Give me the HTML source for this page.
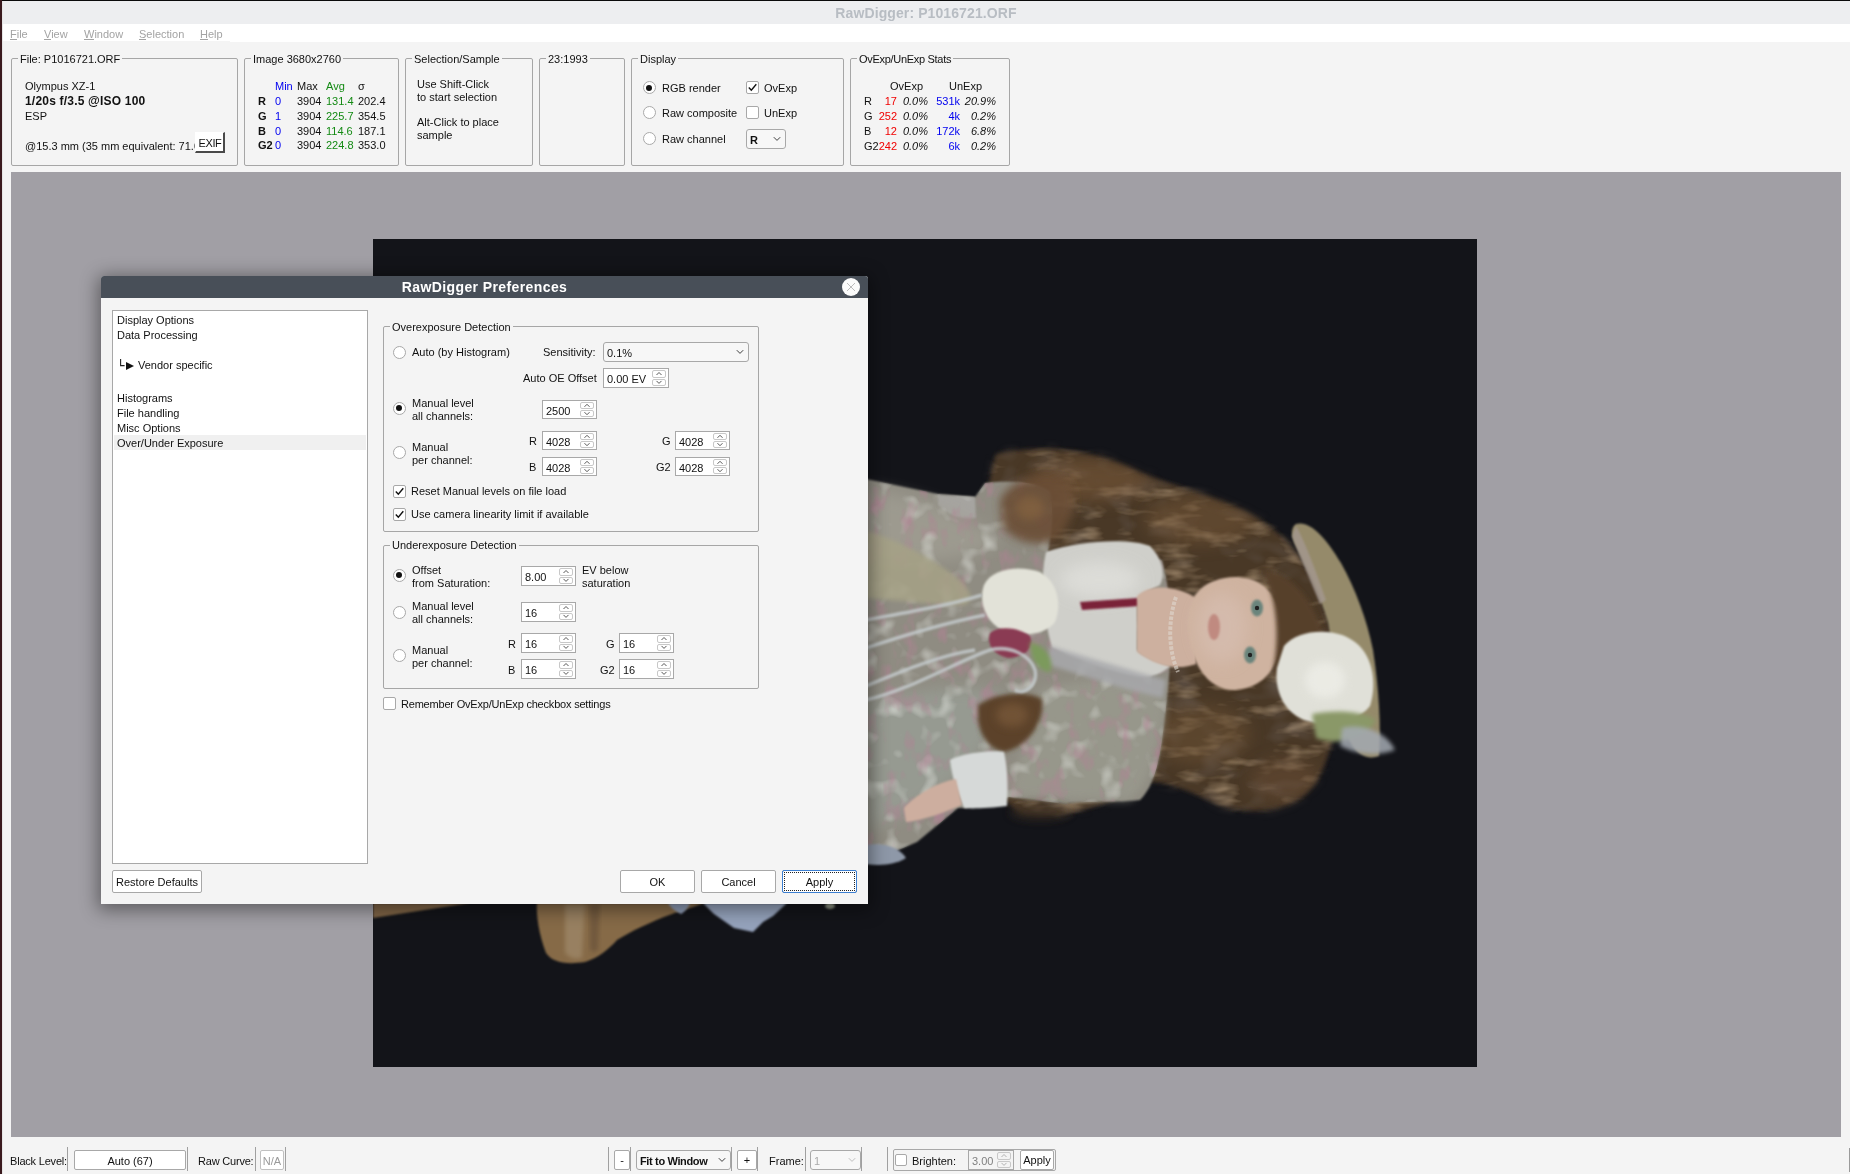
<!DOCTYPE html>
<html><head><meta charset="utf-8">
<style>
*{box-sizing:border-box}
html,body{margin:0;padding:0}
body{width:1850px;height:1174px;overflow:hidden;position:relative;will-change:transform;background:#f4f4f4;font-family:"Liberation Sans",sans-serif;font-size:11px;color:#111}
.a{position:absolute}
.t{position:absolute;white-space:pre}
</style></head><body>
<div class="a" style="left:0px;top:0px;width:1850px;height:1px;background:#0a0a0a"></div>
<div class="a" style="left:0px;top:0px;width:2px;height:1174px;background:#3a1a1e"></div>
<div class="a" style="left:2px;top:1px;width:1px;height:1173px;background:#e6e6e6"></div>
<div class="a" style="left:3px;top:1px;width:1847px;height:23px;background:#edeef0"></div>
<div class="t" style="left:626px;width:600px;text-align:center;top:4.75px;font-size:14px;line-height:17px;font-weight:700;color:#b8bdc3;letter-spacing:0.1px;">RawDigger: P1016721.ORF</div>
<div class="a" style="left:3px;top:24px;width:1847px;height:18px;background:#fff"></div>
<div class="a" style="left:3px;top:41px;width:227px;height:1px;background:#f4f4f4"></div>
<div class="t" style="left:10px;top:27.19px;font-size:11px;line-height:14px;color:#a3a3a3;">File</div>
<div class="t" style="left:44px;top:27.19px;font-size:11px;line-height:14px;color:#a3a3a3;">View</div>
<div class="t" style="left:84px;top:27.19px;font-size:11px;line-height:14px;color:#a3a3a3;">Window</div>
<div class="t" style="left:139px;top:27.19px;font-size:11px;line-height:14px;color:#a3a3a3;">Selection</div>
<div class="t" style="left:200px;top:27.19px;font-size:11px;line-height:14px;color:#a3a3a3;">Help</div>
<div class="a" style="left:10px;top:39px;width:7px;height:1px;background:#a3a3a3"></div>
<div class="a" style="left:44px;top:39px;width:7px;height:1px;background:#a3a3a3"></div>
<div class="a" style="left:84px;top:39px;width:10px;height:1px;background:#a3a3a3"></div>
<div class="a" style="left:139px;top:39px;width:7px;height:1px;background:#a3a3a3"></div>
<div class="a" style="left:200px;top:39px;width:8px;height:1px;background:#a3a3a3"></div>
<div class="a" style="left:11px;top:58px;width:227px;height:108px;border:1px solid #a6a6a6;border-radius:2px;"></div>
<div class="t" style="left:18px;top:53.09px;font-size:11px;line-height:13px;background:#f4f4f4;padding:0 2px;">File: P1016721.ORF</div>
<div class="t" style="left:25px;top:78.99px;font-size:11px;line-height:14px;">Olympus XZ-1</div>
<div class="t" style="left:25px;top:93.94px;font-size:12px;line-height:15px;font-weight:700;letter-spacing:0.2px;">1/20s f/3.5 @ISO 100</div>
<div class="t" style="left:25px;top:108.89px;font-size:11px;line-height:14px;">ESP</div>
<div class="a" style="left:25px;top:138px;width:170px;height:16px;overflow:hidden">
<div class="t" style="left:0px;top:0.79px;font-size:11px;line-height:14px;">@15.3 mm (35 mm equivalent: 71.0 mm)</div>
</div>
<div class="a" style="left:195px;top:132px;width:30px;height:21px;background:#fff;border-right:2px solid #4a4a4a;border-bottom:2px solid #4a4a4a;border-top:1px solid #fff;border-left:1px solid #fff"></div>
<div class="t" style="left:-90px;width:600px;text-align:center;top:135.69px;font-size:11px;line-height:14px;letter-spacing:-0.4px;">EXIF</div>
<div class="a" style="left:244px;top:58px;width:155px;height:108px;border:1px solid #a6a6a6;border-radius:2px;"></div>
<div class="t" style="left:251px;top:53.09px;font-size:11px;line-height:13px;background:#f4f4f4;padding:0 2px;">Image 3680x2760</div>
<div class="t" style="left:275px;top:78.99px;font-size:11px;line-height:14px;color:#0000f0;">Min</div>
<div class="t" style="left:297px;top:78.99px;font-size:11px;line-height:14px;">Max</div>
<div class="t" style="left:326px;top:78.99px;font-size:11px;line-height:14px;color:#138a13;">Avg</div>
<div class="t" style="left:358px;top:78.99px;font-size:11px;line-height:14px;">σ</div>
<div class="t" style="left:258px;top:93.79px;font-size:11px;line-height:14px;font-weight:700;">R</div>
<div class="t" style="left:275px;top:93.79px;font-size:11px;line-height:14px;color:#0000f0;">0</div>
<div class="t" style="left:297px;top:93.79px;font-size:11px;line-height:14px;">3904</div>
<div class="t" style="left:326px;top:93.79px;font-size:11px;line-height:14px;color:#138a13;">131.4</div>
<div class="t" style="left:358px;top:93.79px;font-size:11px;line-height:14px;">202.4</div>
<div class="t" style="left:258px;top:108.89px;font-size:11px;line-height:14px;font-weight:700;">G</div>
<div class="t" style="left:275px;top:108.89px;font-size:11px;line-height:14px;color:#0000f0;">1</div>
<div class="t" style="left:297px;top:108.89px;font-size:11px;line-height:14px;">3904</div>
<div class="t" style="left:326px;top:108.89px;font-size:11px;line-height:14px;color:#138a13;">225.7</div>
<div class="t" style="left:358px;top:108.89px;font-size:11px;line-height:14px;">354.5</div>
<div class="t" style="left:258px;top:123.69px;font-size:11px;line-height:14px;font-weight:700;">B</div>
<div class="t" style="left:275px;top:123.69px;font-size:11px;line-height:14px;color:#0000f0;">0</div>
<div class="t" style="left:297px;top:123.69px;font-size:11px;line-height:14px;">3904</div>
<div class="t" style="left:326px;top:123.69px;font-size:11px;line-height:14px;color:#138a13;">114.6</div>
<div class="t" style="left:358px;top:123.69px;font-size:11px;line-height:14px;">187.1</div>
<div class="t" style="left:258px;top:138.49px;font-size:11px;line-height:14px;font-weight:700;">G2</div>
<div class="t" style="left:275px;top:138.49px;font-size:11px;line-height:14px;color:#0000f0;">0</div>
<div class="t" style="left:297px;top:138.49px;font-size:11px;line-height:14px;">3904</div>
<div class="t" style="left:326px;top:138.49px;font-size:11px;line-height:14px;color:#138a13;">224.8</div>
<div class="t" style="left:358px;top:138.49px;font-size:11px;line-height:14px;">353.0</div>
<div class="a" style="left:405px;top:58px;width:128px;height:108px;border:1px solid #a6a6a6;border-radius:2px;"></div>
<div class="t" style="left:412px;top:53.09px;font-size:11px;line-height:13px;background:#f4f4f4;padding:0 2px;">Selection/Sample</div>
<div class="t" style="left:417px;top:77.49px;font-size:11px;line-height:14px;">Use Shift-Click</div>
<div class="t" style="left:417px;top:90.19px;font-size:11px;line-height:14px;">to start selection</div>
<div class="t" style="left:417px;top:114.79px;font-size:11px;line-height:14px;">Alt-Click to place</div>
<div class="t" style="left:417px;top:127.59px;font-size:11px;line-height:14px;">sample</div>
<div class="a" style="left:539px;top:58px;width:86px;height:108px;border:1px solid #a6a6a6;border-radius:2px;"></div>
<div class="t" style="left:546px;top:53.09px;font-size:11px;line-height:13px;background:#f4f4f4;padding:0 2px;">23:1993</div>
<div class="a" style="left:631px;top:58px;width:213px;height:108px;border:1px solid #a6a6a6;border-radius:2px;"></div>
<div class="t" style="left:638px;top:53.09px;font-size:11px;line-height:13px;background:#f4f4f4;padding:0 2px;">Display</div>
<div class="a" style="left:642.5px;top:81.0px;width:13px;height:13px;border-radius:50%;border:1px solid #a8a8a8;background:#fff"></div>
<div class="a" style="left:646px;top:84.5px;width:6px;height:6px;border-radius:50%;background:#111"></div>
<div class="a" style="left:642.5px;top:106.0px;width:13px;height:13px;border-radius:50%;border:1px solid #a8a8a8;background:#fff"></div>
<div class="a" style="left:642.5px;top:131.8px;width:13px;height:13px;border-radius:50%;border:1px solid #a8a8a8;background:#fff"></div>
<div class="t" style="left:662px;top:81.19px;font-size:11px;line-height:14px;">RGB render</div>
<div class="t" style="left:662px;top:106.19px;font-size:11px;line-height:14px;">Raw composite</div>
<div class="t" style="left:662px;top:132.19px;font-size:11px;line-height:14px;">Raw channel</div>
<div class="a" style="left:746px;top:81px;width:13px;height:13px;border:1px solid #a8a8a8;border-radius:2px;background:#fff"></div>
<svg class="a" style="left:746px;top:81px" width="13" height="13" viewBox="0 0 13 13"><path d="M2.8 6.6 L5.3 9.3 L10.3 3.2" fill="none" stroke="#111" stroke-width="1.4"/></svg>
<div class="a" style="left:746px;top:106px;width:13px;height:13px;border:1px solid #a8a8a8;border-radius:2px;background:#fff"></div>
<div class="t" style="left:764px;top:81.19px;font-size:11px;line-height:14px;">OvExp</div>
<div class="t" style="left:764px;top:106.19px;font-size:11px;line-height:14px;">UnExp</div>
<div class="a" style="left:746px;top:129px;width:40px;height:20px;border:1px solid #a8a8a8;border-radius:3px;background:#f7f7f7;"></div>
<div class="t" style="left:750px;top:133.19px;font-size:11px;line-height:14px;font-weight:700;color:#111;">R</div>
<svg class="a" style="left:772px;top:135.0px" width="10" height="8"><path d="M1.8 2.2 L5 5.4 L8.2 2.2" fill="none" stroke="#333" stroke-width="0.95"/></svg>
<div class="a" style="left:850px;top:58px;width:160px;height:108px;border:1px solid #a6a6a6;border-radius:2px;"></div>
<div class="t" style="left:857px;top:53.09px;font-size:11px;line-height:13px;background:#f4f4f4;padding:0 2px;letter-spacing:-0.3px;">OvExp/UnExp Stats</div>
<div class="t" style="left:890px;top:79.09px;font-size:11px;line-height:14px;">OvExp</div>
<div class="t" style="left:949px;top:79.09px;font-size:11px;line-height:14px;">UnExp</div>
<div class="t" style="left:864px;top:93.89px;font-size:11px;line-height:14px;">R</div>
<div class="t" style="right:953px;top:93.89px;font-size:11px;line-height:14px;color:#f00000;">17</div>
<div class="t" style="right:922px;top:93.89px;font-size:11px;line-height:14px;font-style:italic;">0.0%</div>
<div class="t" style="right:890px;top:93.89px;font-size:11px;line-height:14px;color:#0000f0;">531k</div>
<div class="t" style="right:854px;top:93.89px;font-size:11px;line-height:14px;font-style:italic;">20.9%</div>
<div class="t" style="left:864px;top:108.84px;font-size:11px;line-height:14px;">G</div>
<div class="t" style="right:953px;top:108.84px;font-size:11px;line-height:14px;color:#f00000;">252</div>
<div class="t" style="right:922px;top:108.84px;font-size:11px;line-height:14px;font-style:italic;">0.0%</div>
<div class="t" style="right:890px;top:108.84px;font-size:11px;line-height:14px;color:#0000f0;">4k</div>
<div class="t" style="right:854px;top:108.84px;font-size:11px;line-height:14px;font-style:italic;">0.2%</div>
<div class="t" style="left:864px;top:123.79px;font-size:11px;line-height:14px;">B</div>
<div class="t" style="right:953px;top:123.79px;font-size:11px;line-height:14px;color:#f00000;">12</div>
<div class="t" style="right:922px;top:123.79px;font-size:11px;line-height:14px;font-style:italic;">0.0%</div>
<div class="t" style="right:890px;top:123.79px;font-size:11px;line-height:14px;color:#0000f0;">172k</div>
<div class="t" style="right:854px;top:123.79px;font-size:11px;line-height:14px;font-style:italic;">6.8%</div>
<div class="t" style="left:864px;top:138.74px;font-size:11px;line-height:14px;">G2</div>
<div class="t" style="right:953px;top:138.74px;font-size:11px;line-height:14px;color:#f00000;">242</div>
<div class="t" style="right:922px;top:138.74px;font-size:11px;line-height:14px;font-style:italic;">0.0%</div>
<div class="t" style="right:890px;top:138.74px;font-size:11px;line-height:14px;color:#0000f0;">6k</div>
<div class="t" style="right:854px;top:138.74px;font-size:11px;line-height:14px;font-style:italic;">0.2%</div>
<div class="a" style="left:11px;top:172px;width:1830px;height:965px;background:#a19fa5"></div>
<div class="a" style="left:373px;top:239px;width:1104px;height:828px;background:#131419;overflow:hidden">
<svg class="a" style="left:0;top:0" width="1104" height="828" viewBox="373 239 1104 828">
<defs>
<filter id="b1" x="-20%" y="-20%" width="140%" height="140%"><feGaussianBlur stdDeviation="1.2"/></filter>
<filter id="b2" x="-20%" y="-20%" width="140%" height="140%"><feGaussianBlur stdDeviation="2"/></filter>
<filter id="b4" x="-60%" y="-60%" width="220%" height="220%"><feGaussianBlur stdDeviation="4"/></filter>
<filter id="b8" x="-100%" y="-100%" width="300%" height="300%"><feGaussianBlur stdDeviation="8"/></filter>
<filter id="hairtex" x="0" y="0" width="100%" height="100%">
  <feTurbulence type="fractalNoise" baseFrequency="0.025 0.07" numOctaves="3" seed="7" result="n"/>
  <feColorMatrix in="n" type="matrix" values="0 0 0 0 0.48  0 0 0 0 0.35  0 0 0 0 0.22  0 0 0 1.8 -0.92"/>
</filter>
<filter id="hairdark" x="0" y="0" width="100%" height="100%">
  <feTurbulence type="fractalNoise" baseFrequency="0.03 0.05" numOctaves="2" seed="21" result="n"/>
  <feColorMatrix in="n" type="matrix" values="0 0 0 0 0.12  0 0 0 0 0.09  0 0 0 0 0.07  0 0 0 2.0 -0.95"/>
</filter>
<mask id="hairmask"><path filter="url(#b4)" fill="#fff" d="M996 454 C1040 444 1090 448 1135 470 C1175 488 1230 498 1268 525 C1300 548 1325 590 1335 650 C1340 710 1335 760 1310 790 C1290 812 1250 816 1220 805 C1190 792 1170 782 1150 782 C1110 805 1060 822 1020 812 C990 795 978 760 980 720 C985 650 975 520 996 454 Z"/></mask>
<clipPath id="hairclip"><path d="M996 454 C1040 444 1090 448 1135 470 C1175 488 1230 498 1268 525 C1300 548 1325 590 1335 650 C1340 710 1335 760 1310 790 C1290 812 1250 816 1220 805 C1190 792 1170 782 1150 782 C1110 805 1060 822 1020 812 C990 795 978 760 980 720 C985 650 975 520 996 454 Z"/></clipPath>
<filter id="dresstex" x="0" y="0" width="100%" height="100%">
  <feTurbulence type="fractalNoise" baseFrequency="0.06 0.035" numOctaves="3" seed="3" result="n"/>
  <feColorMatrix in="n" type="matrix" values="0 0 0 0 0.45  0 0 0 0 0.22  0 0 0 0 0.3  0 0 0 1.9 -1.02"/>
</filter>
<filter id="dresslight" x="0" y="0" width="100%" height="100%">
  <feTurbulence type="fractalNoise" baseFrequency="0.05 0.05" numOctaves="2" seed="11" result="n"/>
  <feColorMatrix in="n" type="matrix" values="0 0 0 0 0.78  0 0 0 0 0.8  0 0 0 0 0.76  0 0 0 1.7 -0.92"/>
</filter>
<mask id="dressmask"><path fill="#fff" d="M866 479 L938 494 L975 497 L985 483 C1010 480 1040 482 1050 492 C1055 515 1050 540 1048 552 L1162 560 C1172 595 1172 645 1168 690 C1162 740 1160 780 1140 800 C1110 803 1080 800 1066 804 L1009 797 L964 808 L958 808 L917 842 L866 864 Z"/></mask>
</defs>
<!-- hair mass -->
<path filter="url(#b2)" fill="#4a3726" d="M996 454 C1040 444 1090 448 1135 470 C1175 488 1230 498 1268 525 C1300 548 1325 590 1335 650 C1340 710 1335 760 1310 790 C1290 812 1250 816 1220 805 C1190 792 1170 782 1150 782 C1110 805 1060 822 1020 812 C990 795 978 760 980 720 C985 650 975 520 996 454 Z"/>
<g mask="url(#hairmask)">
<rect x="970" y="430" width="380" height="400" fill="#000" filter="url(#hairdark)"/>
<rect x="970" y="430" width="380" height="400" fill="#000" filter="url(#hairtex)"/>
<ellipse filter="url(#b8)" cx="1090" cy="480" rx="60" ry="22" fill="#7a5a3a" opacity="0.55"/>
<ellipse filter="url(#b8)" cx="1200" cy="520" rx="55" ry="25" fill="#755638" opacity="0.5"/>
<ellipse filter="url(#b8)" cx="1200" cy="735" rx="50" ry="30" fill="#6e5236" opacity="0.5"/>
<ellipse filter="url(#b8)" cx="1285" cy="780" rx="35" ry="22" fill="#6a4e34" opacity="0.5"/>
</g>
<!-- dress body -->
<path filter="url(#b1)" fill="#8f8c82" d="M866 479 L938 494 L975 497 L985 483 C1010 480 1040 482 1050 492 C1055 515 1050 540 1048 552 L1162 560 C1172 595 1172 645 1168 690 C1162 740 1160 780 1140 800 C1110 803 1080 800 1066 804 L1009 797 L964 808 L958 808 L917 842 L866 864 Z"/>
<!-- white cuff at top -->
<path filter="url(#b1)" fill="#a6a4a0" d="M938 495 L975 497 L976 518 C960 520 948 515 938 505 Z"/>
<!-- lighter left upper -->
<path filter="url(#b8)" fill="#a3a095" opacity="0.7" d="M870 490 C910 495 960 510 1000 540 C980 560 930 565 870 560 Z"/>
<!-- lower dress light greenish -->
<path filter="url(#b8)" fill="#9aa098" opacity="0.7" d="M870 700 C920 690 980 680 1010 700 C990 760 940 800 870 830 Z"/>
<!-- lower sleeve lighter -->
<path filter="url(#b4)" fill="#9a9a8e" opacity="0.8" d="M1040 690 C1090 675 1140 680 1166 700 C1160 750 1150 785 1130 800 C1090 800 1040 798 1010 795 C1020 760 1030 720 1040 690 Z"/>
<g mask="url(#dressmask)">
<rect x="860" y="470" width="320" height="400" fill="#000" filter="url(#dresslight)"/>
<rect x="860" y="470" width="320" height="400" fill="#000" filter="url(#dresstex)"/>
</g>
<!-- lace yellow -->
<path filter="url(#b2)" fill="#a6a286" opacity="0.85" d="M866 531 C900 540 935 560 960 580 C970 590 975 600 965 605 C930 605 895 600 866 598 Z"/>
<!-- hair curl over sleeve -->
<path filter="url(#b4)" fill="#6a4e34" opacity="0.9" d="M1000 500 C1010 480 1040 470 1065 478 C1080 490 1075 525 1055 540 C1035 548 1010 540 1002 525 Z"/>
<ellipse filter="url(#b4)" cx="1030" cy="508" rx="14" ry="12" fill="#85643f" opacity="0.7"/>
<!-- hair lock between -->
<path filter="url(#b2)" fill="#5c4329" d="M978 705 C1000 690 1035 692 1042 700 C1045 720 1030 745 1005 752 C990 750 975 735 978 705 Z"/>
<ellipse filter="url(#b4)" cx="1012" cy="715" rx="16" ry="12" fill="#7a5a3a" opacity="0.7"/>
<!-- blouse -->
<path filter="url(#b1)" fill="#cfcfca" d="M1046 552 C1080 540 1130 538 1150 546 C1162 558 1166 574 1160 585 C1150 590 1140 595 1137 600 L1137 650 C1145 658 1160 662 1170 666 C1162 674 1150 678 1140 677 C1110 672 1080 660 1052 648 C1042 612 1040 578 1046 552 Z"/>
<ellipse filter="url(#b8)" cx="1100" cy="580" rx="40" ry="18" fill="#e2e2de" opacity="0.7"/>
<!-- lace band under blouse -->
<path filter="url(#b2)" fill="#a8a9ac" opacity="0.85" d="M1050 646 C1090 658 1130 670 1166 680 L1163 698 C1125 690 1085 676 1046 664 Z"/>
<!-- ribbon red -->
<path filter="url(#b1)" fill="#7a2038" d="M1080 602 L1138 598 L1140 606 L1082 610 Z"/>
<!-- neck -->
<path filter="url(#b1)" fill="#cdb09f" d="M1137 596 C1150 583 1178 586 1196 598 L1196 664 C1180 670 1158 668 1137 652 Z"/>
<path fill="none" stroke="#e0d8d0" stroke-width="4" stroke-dasharray="3.5 1.5" opacity="0.6" d="M1176 597 C1168 620 1168 650 1178 672"/>
<!-- face -->
<path filter="url(#b1)" fill="#cfb3a0" d="M1188 625 C1186 595 1205 578 1235 577 C1262 577 1280 595 1282 625 C1284 660 1268 688 1235 690 C1205 690 1190 660 1188 625 Z"/>
<ellipse filter="url(#b8)" cx="1222" cy="628" rx="25" ry="35" fill="#d8c0b4" opacity="0.6"/>
<!-- bangs -->
<path filter="url(#b2)" fill="#56402a" d="M1262 570 C1290 572 1312 598 1322 630 C1320 660 1302 675 1272 676 C1280 640 1278 600 1262 570 Z"/>
<!-- eyes/lips -->
<ellipse filter="url(#b1)" cx="1257" cy="608" rx="6" ry="8.5" fill="#6a847c"/><circle cx="1257" cy="608" r="2.2" fill="#222"/>
<ellipse filter="url(#b1)" cx="1250" cy="655" rx="6" ry="8.5" fill="#6a847c"/><circle cx="1250" cy="655" r="2.2" fill="#222"/>
<ellipse filter="url(#b1)" cx="1214" cy="627" rx="6" ry="13" fill="#c08a80"/>
<!-- hat -->
<path filter="url(#b1)" fill="#958a6a" d="M1296 524 C1310 520 1326 538 1341 563 C1356 590 1367 620 1373 650 C1379 690 1381 725 1379 756 C1362 762 1350 748 1343 725 C1337 690 1333 652 1328 622 C1320 596 1308 570 1297 548 C1291 538 1290 528 1296 524 Z"/>
<path filter="url(#b1)" fill="#a49890" opacity="0.8" d="M1296 526 C1304 540 1314 565 1326 600 L1320 604 C1308 575 1298 552 1292 536 Z"/>
<!-- flower on hat -->
<path filter="url(#b1)" fill="#e0e0d8" d="M1284 646 C1298 628 1336 628 1352 640 C1372 652 1378 682 1370 706 C1358 722 1328 728 1304 720 C1284 712 1274 690 1277 668 Z"/>
<ellipse filter="url(#b4)" cx="1325" cy="680" rx="20" ry="18" fill="#f0f0ea" opacity="0.7"/>
<path filter="url(#b2)" fill="#8a9868" d="M1312 714 C1332 710 1360 710 1376 720 C1366 740 1336 746 1316 738 Z"/>
<path filter="url(#b2)" fill="#a4aab2" opacity="0.85" d="M1342 728 C1364 722 1388 734 1395 750 C1376 757 1356 754 1340 746 Z"/>
<!-- flower on dress -->
<path filter="url(#b1)" fill="#e2e2d8" d="M984 585 C992 568 1020 565 1040 572 C1058 582 1062 605 1055 622 C1045 635 1022 638 1002 630 C986 622 978 602 984 585 Z"/>
<path filter="url(#b1)" fill="#8a3a52" d="M990 633 C1000 625 1020 628 1030 636 C1035 648 1025 657 1008 658 C994 655 986 645 990 633 Z"/>
<path filter="url(#b2)" fill="#7c9a5c" d="M1030 642 C1045 645 1055 660 1050 672 C1040 672 1030 660 1030 642 Z"/>
<!-- ribbons -->
<g fill="none" stroke="#c4cacc" stroke-width="3.5" opacity="0.85" filter="url(#b1)">
<path d="M866 620 C910 612 950 605 982 595"/>
<path d="M866 648 C905 635 950 622 985 615"/>
<path d="M866 700 C910 690 960 660 990 650 C1010 645 1030 655 1035 670 C1038 685 1025 695 1015 690"/>
<path d="M866 686 C900 672 940 655 975 650"/>
</g>
<!-- cuff and hand -->
<path filter="url(#b1)" fill="#d6d9d8" d="M950 760 C965 752 995 750 1004 752 C1008 770 1008 790 1007 806 C990 808 972 809 964 808 C958 795 952 778 950 760 Z"/>
<path filter="url(#b1)" fill="#cdae9f" d="M904 808 C915 795 938 782 956 779 L962 805 C945 812 925 820 906 822 Z"/>
<!-- hair wisps below sleeve -->
<ellipse filter="url(#b4)" cx="1040" cy="812" rx="30" ry="8" fill="#3a2e24" opacity="0.7"/>
<!-- wooden stand -->
<path filter="url(#b1)" fill="#7e6444" d="M373 903 L470 903 L373 918 Z"/>
<path filter="url(#b1)" fill="#866a46" d="M537 903 L705 903 C690 908 680 911 672 914 C650 922 630 932 617 940 C608 950 598 958 585 962 C565 965 552 962 546 953 C539 935 536 915 537 903 Z"/>
<path filter="url(#b2)" fill="#a08a6c" opacity="0.7" d="M565 904 L585 904 L582 958 C575 960 568 958 565 952 Z"/>
<path filter="url(#b2)" fill="#5e4a34" opacity="0.5" d="M590 904 L600 904 L598 950 C594 953 590 952 590 948 Z"/>
<!-- lace feet -->
<path filter="url(#b1)" fill="#8e9cb6" d="M668 903 L690 903 C688 909 684 912 681 914 C675 911 670 907 668 903 Z"/>
<path filter="url(#b1)" fill="#95a3bc" d="M703 903 L787 903 L773 916 L763 922 L753 932 L734 928 L714 914 Z"/>
<path filter="url(#b1)" fill="#8e98a8" d="M866 845 C885 842 900 848 906 858 C895 865 880 866 866 864 Z"/>
<ellipse cx="830" cy="906" rx="5" ry="3" fill="#8a9080" filter="url(#b1)"/>
</svg>

</div>
<div class="t" style="left:10px;top:1154.19px;font-size:11px;line-height:14px;letter-spacing:-0.2px;">Black Level:</div>
<div class="a" style="left:67px;top:1147px;width:1px;height:24px;background:#a0a0a0"></div>
<div class="a" style="left:74px;top:1150px;width:112px;height:20px;border:1px solid #a8a8a8;border-radius:2px;background:#fff"></div>
<div class="t" style="left:-170px;width:600px;text-align:center;top:1154.19px;font-size:11px;line-height:14px;">Auto (67)</div>
<div class="a" style="left:187px;top:1147px;width:1px;height:24px;background:#a0a0a0"></div>
<div class="t" style="left:198px;top:1154.19px;font-size:11px;line-height:14px;letter-spacing:-0.2px;">Raw Curve:</div>
<div class="a" style="left:255px;top:1147px;width:1px;height:24px;background:#a0a0a0"></div>
<div class="a" style="left:260px;top:1150px;width:24px;height:20px;border:1px solid #c0c0c0;border-radius:2px;background:#fff"></div>
<div class="t" style="left:-28px;width:600px;text-align:center;top:1154.19px;font-size:11px;line-height:14px;color:#999;">N/A</div>
<div class="a" style="left:285px;top:1147px;width:1px;height:24px;background:#a0a0a0"></div>
<div class="a" style="left:608px;top:1147px;width:1px;height:24px;background:#a0a0a0"></div>
<div class="a" style="left:614px;top:1150px;width:16px;height:20px;border:1px solid #a8a8a8;border-radius:2px;background:#fff;"></div>
<div class="t" style="left:322.0px;width:600px;text-align:center;top:1153.19px;font-size:11px;line-height:14px;">-</div>
<div class="a" style="left:630px;top:1147px;width:1px;height:24px;background:#a0a0a0"></div>
<div class="a" style="left:636px;top:1150px;width:95px;height:20px;border:1px solid #a8a8a8;border-radius:3px;background:#f7f7f7;"></div>
<div class="t" style="left:640px;top:1154.19px;font-size:11px;line-height:14px;font-weight:700;color:#111;letter-spacing:-0.35px;">Fit to Window</div>
<svg class="a" style="left:717px;top:1156.0px" width="10" height="8"><path d="M1.8 2.2 L5 5.4 L8.2 2.2" fill="none" stroke="#333" stroke-width="0.95"/></svg>
<div class="a" style="left:731px;top:1147px;width:1px;height:24px;background:#a0a0a0"></div>
<div class="a" style="left:737px;top:1150px;width:20px;height:20px;border:1px solid #a8a8a8;border-radius:2px;background:#fff;"></div>
<div class="t" style="left:447.0px;width:600px;text-align:center;top:1153.19px;font-size:11px;line-height:14px;">+</div>
<div class="a" style="left:757px;top:1147px;width:1px;height:24px;background:#a0a0a0"></div>
<div class="t" style="left:769px;top:1154.19px;font-size:11px;line-height:14px;">Frame:</div>
<div class="a" style="left:805px;top:1147px;width:1px;height:24px;background:#a0a0a0"></div>
<div class="a" style="left:810px;top:1150px;width:51px;height:20px;border:1px solid #a8a8a8;border-radius:3px;background:#f7f7f7;"></div>
<div class="t" style="left:814px;top:1154.19px;font-size:11px;line-height:14px;color:#aaa;">1</div>
<svg class="a" style="left:847px;top:1156.0px" width="10" height="8"><path d="M1.8 2.2 L5 5.4 L8.2 2.2" fill="none" stroke="#bbb" stroke-width="0.95"/></svg>
<div class="a" style="left:861px;top:1147px;width:1px;height:24px;background:#a0a0a0"></div>
<div class="a" style="left:887px;top:1147px;width:1px;height:24px;background:#a0a0a0"></div>
<div class="a" style="left:893px;top:1149px;width:163px;height:22px;border:1px solid #a8a8a8;border-radius:2px"></div>
<div class="a" style="left:895px;top:1154px;width:12px;height:12px;border:1px solid #a8a8a8;border-radius:2px;background:#fff"></div>
<div class="t" style="left:912px;top:1154.19px;font-size:11px;line-height:14px;">Brighten:</div>
<div class="a" style="left:968px;top:1150px;width:46px;height:20px;border:1px solid #a8a8a8;background:#f4f4f4;"></div>
<div class="t" style="left:972px;top:1154.19px;font-size:11px;line-height:14px;color:#808080;">3.00</div>
<div class="a" style="left:997px;top:1152px;width:14px;height:7.5px;border:1px solid #c8c8c8;border-radius:2px;"></div>
<div class="a" style="left:997px;top:1160.5px;width:14px;height:7.5px;border:1px solid #c8c8c8;border-radius:2px;"></div>
<svg class="a" style="left:997px;top:1150px;overflow:visible" width="14" height="20"><path d="M4.5 7.0 L7 4.5 L9.5 7.0 M4.5 12.9 L7 15.4 L9.5 12.9" fill="none" stroke="#aaa" stroke-width="0.9"/></svg>
<div class="a" style="left:1020px;top:1150px;width:34px;height:20px;border:1px solid #a8a8a8;border-radius:2px;background:#fff;"></div>
<div class="t" style="left:737.0px;width:600px;text-align:center;top:1153.19px;font-size:11px;line-height:14px;">Apply</div>
<div class="a" style="left:1849px;top:1148px;width:1px;height:24px;background:#9a9a9a"></div>
<div class="a" style="left:101px;top:276px;width:767px;height:628px;background:#f4f4f4;border-radius:3px 3px 0 0;box-shadow:0 3px 18px 3px rgba(0,0,0,0.42)"></div>
<div class="a" style="left:101px;top:276px;width:767px;height:22px;background:#484f58;border-radius:3px 3px 0 0"></div>
<div class="t" style="left:184.5px;width:600px;text-align:center;top:279.15px;font-size:14px;line-height:17px;font-weight:700;color:#fff;letter-spacing:0.4px;">RawDigger Preferences</div>
<div class="a" style="left:842px;top:278px;width:18px;height:18px;border-radius:50%;background:#fbfbfb"></div>
<svg class="a" style="left:842px;top:278px" width="18" height="18"><path d="M5 5 L13 13 M13 5 L5 13" stroke="#bbb" stroke-width="1"/></svg>
<div class="a" style="left:112px;top:310px;width:256px;height:554px;border:1px solid #a8a8a8;background:#fff"></div>
<div class="a" style="left:114px;top:435px;width:252px;height:15px;background:#f0f0f0"></div>
<div class="t" style="left:117px;top:313.49px;font-size:11px;line-height:14px;">Display Options</div>
<div class="t" style="left:117px;top:328.09px;font-size:11px;line-height:14px;">Data Processing</div>
<div class="t" style="left:117px;top:391.49px;font-size:11px;line-height:14px;">Histograms</div>
<div class="t" style="left:117px;top:406.19px;font-size:11px;line-height:14px;">File handling</div>
<div class="t" style="left:117px;top:420.69px;font-size:11px;line-height:14px;">Misc Options</div>
<div class="t" style="left:117px;top:436.39px;font-size:11px;line-height:14px;">Over/Under Exposure</div>
<svg class="a" style="left:115px;top:355px" width="25" height="20"><path d="M5.6 4 V10.6 H9.6" fill="none" stroke="#222" stroke-width="1.1"/><path d="M11 7 L19 11 L11 15 Z" fill="#111"/></svg>
<div class="t" style="left:138px;top:358.39px;font-size:11px;line-height:14px;">Vendor specific</div>
<div class="a" style="left:383px;top:326px;width:376px;height:206px;border:1px solid #a6a6a6;border-radius:2px;"></div>
<div class="t" style="left:390px;top:320.59px;font-size:11px;line-height:13px;background:#f4f4f4;padding:0 2px;">Overexposure Detection</div>
<div class="a" style="left:392.5px;top:345.5px;width:13px;height:13px;border-radius:50%;border:1px solid #a8a8a8;background:#fff"></div>
<div class="t" style="left:412px;top:345.19px;font-size:11px;line-height:14px;">Auto (by Histogram)</div>
<div class="t" style="left:543px;top:345.19px;font-size:11px;line-height:14px;">Sensitivity:</div>
<div class="a" style="left:603px;top:342px;width:146px;height:20px;border:1px solid #a8a8a8;border-radius:3px;background:#f7f7f7;"></div>
<div class="t" style="left:607px;top:346.19px;font-size:11px;line-height:14px;color:#111;">0.1%</div>
<svg class="a" style="left:735px;top:348.0px" width="10" height="8"><path d="M1.8 2.2 L5 5.4 L8.2 2.2" fill="none" stroke="#333" stroke-width="0.95"/></svg>
<div class="t" style="left:523px;top:371.19px;font-size:11px;line-height:14px;">Auto OE Offset</div>
<div class="a" style="left:603px;top:368px;width:66px;height:20px;border:1px solid #a8a8a8;background:#fff;"></div>
<div class="t" style="left:607px;top:372.19px;font-size:11px;line-height:14px;color:#111;">0.00 EV</div>
<div class="a" style="left:652px;top:370px;width:14px;height:7.5px;border:1px solid #c8c8c8;border-radius:2px;"></div>
<div class="a" style="left:652px;top:378.5px;width:14px;height:7.5px;border:1px solid #c8c8c8;border-radius:2px;"></div>
<svg class="a" style="left:652px;top:368px;overflow:visible" width="14" height="20"><path d="M4.5 7.0 L7 4.5 L9.5 7.0 M4.5 12.9 L7 15.4 L9.5 12.9" fill="none" stroke="#444" stroke-width="0.9"/></svg>
<div class="a" style="left:392.5px;top:401.5px;width:13px;height:13px;border-radius:50%;border:1px solid #a8a8a8;background:#fff"></div>
<div class="a" style="left:396px;top:405px;width:6px;height:6px;border-radius:50%;background:#111"></div>
<div class="t" style="left:412px;top:396.19px;font-size:11px;line-height:14px;">Manual level</div>
<div class="t" style="left:412px;top:409.19px;font-size:11px;line-height:14px;">all channels:</div>
<div class="a" style="left:542px;top:400px;width:55px;height:19px;border:1px solid #a8a8a8;background:#fff;"></div>
<div class="t" style="left:546px;top:403.69px;font-size:11px;line-height:14px;color:#111;">2500</div>
<div class="a" style="left:580px;top:402px;width:14px;height:7.0px;border:1px solid #c8c8c8;border-radius:2px;"></div>
<div class="a" style="left:580px;top:410.0px;width:14px;height:7.0px;border:1px solid #c8c8c8;border-radius:2px;"></div>
<svg class="a" style="left:580px;top:400px;overflow:visible" width="14" height="19"><path d="M4.5 6.8 L7 4.3 L9.5 6.8 M4.5 12.2 L7 14.7 L9.5 12.2" fill="none" stroke="#444" stroke-width="0.9"/></svg>
<div class="a" style="left:392.5px;top:445.5px;width:13px;height:13px;border-radius:50%;border:1px solid #a8a8a8;background:#fff"></div>
<div class="t" style="left:412px;top:440.19px;font-size:11px;line-height:14px;">Manual</div>
<div class="t" style="left:412px;top:453.19px;font-size:11px;line-height:14px;">per channel:</div>
<div class="t" style="left:529px;top:434.19px;font-size:11px;line-height:14px;">R</div>
<div class="a" style="left:542px;top:431px;width:55px;height:19px;border:1px solid #a8a8a8;background:#fff;"></div>
<div class="t" style="left:546px;top:434.69px;font-size:11px;line-height:14px;color:#111;">4028</div>
<div class="a" style="left:580px;top:433px;width:14px;height:7.0px;border:1px solid #c8c8c8;border-radius:2px;"></div>
<div class="a" style="left:580px;top:441.0px;width:14px;height:7.0px;border:1px solid #c8c8c8;border-radius:2px;"></div>
<svg class="a" style="left:580px;top:431px;overflow:visible" width="14" height="19"><path d="M4.5 6.8 L7 4.3 L9.5 6.8 M4.5 12.2 L7 14.7 L9.5 12.2" fill="none" stroke="#444" stroke-width="0.9"/></svg>
<div class="t" style="left:529px;top:460.19px;font-size:11px;line-height:14px;">B</div>
<div class="a" style="left:542px;top:457px;width:55px;height:19px;border:1px solid #a8a8a8;background:#fff;"></div>
<div class="t" style="left:546px;top:460.69px;font-size:11px;line-height:14px;color:#111;">4028</div>
<div class="a" style="left:580px;top:459px;width:14px;height:7.0px;border:1px solid #c8c8c8;border-radius:2px;"></div>
<div class="a" style="left:580px;top:467.0px;width:14px;height:7.0px;border:1px solid #c8c8c8;border-radius:2px;"></div>
<svg class="a" style="left:580px;top:457px;overflow:visible" width="14" height="19"><path d="M4.5 6.8 L7 4.3 L9.5 6.8 M4.5 12.2 L7 14.7 L9.5 12.2" fill="none" stroke="#444" stroke-width="0.9"/></svg>
<div class="t" style="left:662px;top:434.19px;font-size:11px;line-height:14px;">G</div>
<div class="a" style="left:675px;top:431px;width:55px;height:19px;border:1px solid #a8a8a8;background:#fff;"></div>
<div class="t" style="left:679px;top:434.69px;font-size:11px;line-height:14px;color:#111;">4028</div>
<div class="a" style="left:713px;top:433px;width:14px;height:7.0px;border:1px solid #c8c8c8;border-radius:2px;"></div>
<div class="a" style="left:713px;top:441.0px;width:14px;height:7.0px;border:1px solid #c8c8c8;border-radius:2px;"></div>
<svg class="a" style="left:713px;top:431px;overflow:visible" width="14" height="19"><path d="M4.5 6.8 L7 4.3 L9.5 6.8 M4.5 12.2 L7 14.7 L9.5 12.2" fill="none" stroke="#444" stroke-width="0.9"/></svg>
<div class="t" style="left:656px;top:460.19px;font-size:11px;line-height:14px;">G2</div>
<div class="a" style="left:675px;top:457px;width:55px;height:19px;border:1px solid #a8a8a8;background:#fff;"></div>
<div class="t" style="left:679px;top:460.69px;font-size:11px;line-height:14px;color:#111;">4028</div>
<div class="a" style="left:713px;top:459px;width:14px;height:7.0px;border:1px solid #c8c8c8;border-radius:2px;"></div>
<div class="a" style="left:713px;top:467.0px;width:14px;height:7.0px;border:1px solid #c8c8c8;border-radius:2px;"></div>
<svg class="a" style="left:713px;top:457px;overflow:visible" width="14" height="19"><path d="M4.5 6.8 L7 4.3 L9.5 6.8 M4.5 12.2 L7 14.7 L9.5 12.2" fill="none" stroke="#444" stroke-width="0.9"/></svg>
<div class="a" style="left:393px;top:485px;width:13px;height:13px;border:1px solid #a8a8a8;border-radius:2px;background:#fff"></div>
<svg class="a" style="left:393px;top:485px" width="13" height="13" viewBox="0 0 13 13"><path d="M2.8 6.6 L5.3 9.3 L10.3 3.2" fill="none" stroke="#111" stroke-width="1.4"/></svg>
<div class="t" style="left:411px;top:484.19px;font-size:11px;line-height:14px;">Reset Manual levels on file load</div>
<div class="a" style="left:393px;top:508px;width:13px;height:13px;border:1px solid #a8a8a8;border-radius:2px;background:#fff"></div>
<svg class="a" style="left:393px;top:508px" width="13" height="13" viewBox="0 0 13 13"><path d="M2.8 6.6 L5.3 9.3 L10.3 3.2" fill="none" stroke="#111" stroke-width="1.4"/></svg>
<div class="t" style="left:411px;top:507.19px;font-size:11px;line-height:14px;">Use camera linearity limit if available</div>
<div class="a" style="left:383px;top:545px;width:376px;height:144px;border:1px solid #a6a6a6;border-radius:2px;"></div>
<div class="t" style="left:390px;top:539.29px;font-size:11px;line-height:13px;background:#f4f4f4;padding:0 2px;">Underexposure Detection</div>
<div class="a" style="left:392.5px;top:568.5px;width:13px;height:13px;border-radius:50%;border:1px solid #a8a8a8;background:#fff"></div>
<div class="a" style="left:396px;top:572px;width:6px;height:6px;border-radius:50%;background:#111"></div>
<div class="t" style="left:412px;top:563.19px;font-size:11px;line-height:14px;">Offset</div>
<div class="t" style="left:412px;top:576.19px;font-size:11px;line-height:14px;">from Saturation:</div>
<div class="a" style="left:521px;top:566px;width:55px;height:20px;border:1px solid #a8a8a8;background:#fff;"></div>
<div class="t" style="left:525px;top:570.19px;font-size:11px;line-height:14px;color:#111;">8.00</div>
<div class="a" style="left:559px;top:568px;width:14px;height:7.5px;border:1px solid #c8c8c8;border-radius:2px;"></div>
<div class="a" style="left:559px;top:576.5px;width:14px;height:7.5px;border:1px solid #c8c8c8;border-radius:2px;"></div>
<svg class="a" style="left:559px;top:566px;overflow:visible" width="14" height="20"><path d="M4.5 7.0 L7 4.5 L9.5 7.0 M4.5 12.9 L7 15.4 L9.5 12.9" fill="none" stroke="#444" stroke-width="0.9"/></svg>
<div class="t" style="left:582px;top:563.19px;font-size:11px;line-height:14px;">EV below</div>
<div class="t" style="left:582px;top:576.19px;font-size:11px;line-height:14px;">saturation</div>
<div class="a" style="left:392.5px;top:605.5px;width:13px;height:13px;border-radius:50%;border:1px solid #a8a8a8;background:#fff"></div>
<div class="t" style="left:412px;top:599.19px;font-size:11px;line-height:14px;">Manual level</div>
<div class="t" style="left:412px;top:612.19px;font-size:11px;line-height:14px;">all channels:</div>
<div class="a" style="left:521px;top:602px;width:55px;height:20px;border:1px solid #a8a8a8;background:#fff;"></div>
<div class="t" style="left:525px;top:606.19px;font-size:11px;line-height:14px;color:#111;">16</div>
<div class="a" style="left:559px;top:604px;width:14px;height:7.5px;border:1px solid #c8c8c8;border-radius:2px;"></div>
<div class="a" style="left:559px;top:612.5px;width:14px;height:7.5px;border:1px solid #c8c8c8;border-radius:2px;"></div>
<svg class="a" style="left:559px;top:602px;overflow:visible" width="14" height="20"><path d="M4.5 7.0 L7 4.5 L9.5 7.0 M4.5 12.9 L7 15.4 L9.5 12.9" fill="none" stroke="#444" stroke-width="0.9"/></svg>
<div class="a" style="left:392.5px;top:648.5px;width:13px;height:13px;border-radius:50%;border:1px solid #a8a8a8;background:#fff"></div>
<div class="t" style="left:412px;top:643.19px;font-size:11px;line-height:14px;">Manual</div>
<div class="t" style="left:412px;top:656.19px;font-size:11px;line-height:14px;">per channel:</div>
<div class="t" style="left:508px;top:637.19px;font-size:11px;line-height:14px;">R</div>
<div class="a" style="left:521px;top:633px;width:55px;height:20px;border:1px solid #a8a8a8;background:#fff;"></div>
<div class="t" style="left:525px;top:637.19px;font-size:11px;line-height:14px;color:#111;">16</div>
<div class="a" style="left:559px;top:635px;width:14px;height:7.5px;border:1px solid #c8c8c8;border-radius:2px;"></div>
<div class="a" style="left:559px;top:643.5px;width:14px;height:7.5px;border:1px solid #c8c8c8;border-radius:2px;"></div>
<svg class="a" style="left:559px;top:633px;overflow:visible" width="14" height="20"><path d="M4.5 7.0 L7 4.5 L9.5 7.0 M4.5 12.9 L7 15.4 L9.5 12.9" fill="none" stroke="#444" stroke-width="0.9"/></svg>
<div class="t" style="left:508px;top:663.19px;font-size:11px;line-height:14px;">B</div>
<div class="a" style="left:521px;top:659px;width:55px;height:20px;border:1px solid #a8a8a8;background:#fff;"></div>
<div class="t" style="left:525px;top:663.19px;font-size:11px;line-height:14px;color:#111;">16</div>
<div class="a" style="left:559px;top:661px;width:14px;height:7.5px;border:1px solid #c8c8c8;border-radius:2px;"></div>
<div class="a" style="left:559px;top:669.5px;width:14px;height:7.5px;border:1px solid #c8c8c8;border-radius:2px;"></div>
<svg class="a" style="left:559px;top:659px;overflow:visible" width="14" height="20"><path d="M4.5 7.0 L7 4.5 L9.5 7.0 M4.5 12.9 L7 15.4 L9.5 12.9" fill="none" stroke="#444" stroke-width="0.9"/></svg>
<div class="t" style="left:606px;top:637.19px;font-size:11px;line-height:14px;">G</div>
<div class="a" style="left:619px;top:633px;width:55px;height:20px;border:1px solid #a8a8a8;background:#fff;"></div>
<div class="t" style="left:623px;top:637.19px;font-size:11px;line-height:14px;color:#111;">16</div>
<div class="a" style="left:657px;top:635px;width:14px;height:7.5px;border:1px solid #c8c8c8;border-radius:2px;"></div>
<div class="a" style="left:657px;top:643.5px;width:14px;height:7.5px;border:1px solid #c8c8c8;border-radius:2px;"></div>
<svg class="a" style="left:657px;top:633px;overflow:visible" width="14" height="20"><path d="M4.5 7.0 L7 4.5 L9.5 7.0 M4.5 12.9 L7 15.4 L9.5 12.9" fill="none" stroke="#444" stroke-width="0.9"/></svg>
<div class="t" style="left:600px;top:663.19px;font-size:11px;line-height:14px;">G2</div>
<div class="a" style="left:619px;top:659px;width:55px;height:20px;border:1px solid #a8a8a8;background:#fff;"></div>
<div class="t" style="left:623px;top:663.19px;font-size:11px;line-height:14px;color:#111;">16</div>
<div class="a" style="left:657px;top:661px;width:14px;height:7.5px;border:1px solid #c8c8c8;border-radius:2px;"></div>
<div class="a" style="left:657px;top:669.5px;width:14px;height:7.5px;border:1px solid #c8c8c8;border-radius:2px;"></div>
<svg class="a" style="left:657px;top:659px;overflow:visible" width="14" height="20"><path d="M4.5 7.0 L7 4.5 L9.5 7.0 M4.5 12.9 L7 15.4 L9.5 12.9" fill="none" stroke="#444" stroke-width="0.9"/></svg>
<div class="a" style="left:383px;top:697px;width:13px;height:13px;border:1px solid #a8a8a8;border-radius:2px;background:#fff"></div>
<div class="t" style="left:401px;top:696.89px;font-size:11px;line-height:14px;letter-spacing:-0.2px;">Remember OvExp/UnExp checkbox settings</div>
<div class="a" style="left:112px;top:870px;width:90px;height:23px;border:1px solid #a8a8a8;border-radius:2px;background:#fff;"></div>
<div class="t" style="left:-143.0px;width:600px;text-align:center;top:874.69px;font-size:11px;line-height:14px;">Restore Defaults</div>
<div class="a" style="left:620px;top:870px;width:75px;height:23px;border:1px solid #a8a8a8;border-radius:2px;background:#fff;"></div>
<div class="t" style="left:357.5px;width:600px;text-align:center;top:874.69px;font-size:11px;line-height:14px;">OK</div>
<div class="a" style="left:701px;top:870px;width:75px;height:23px;border:1px solid #a8a8a8;border-radius:2px;background:#fff;"></div>
<div class="t" style="left:438.5px;width:600px;text-align:center;top:874.69px;font-size:11px;line-height:14px;">Cancel</div>
<div class="a" style="left:782px;top:870px;width:75px;height:23px;border:1px solid #a8a8a8;border-radius:2px;background:#fff;"></div>
<div class="a" style="left:782px;top:870px;width:75px;height:23px;border:1px solid #3c7fd1;border-radius:2px;"></div>
<div class="a" style="left:784px;top:872px;width:71px;height:19px;border:1px dotted #222;"></div>
<div class="t" style="left:519.5px;width:600px;text-align:center;top:874.69px;font-size:11px;line-height:14px;">Apply</div>
</body></html>
